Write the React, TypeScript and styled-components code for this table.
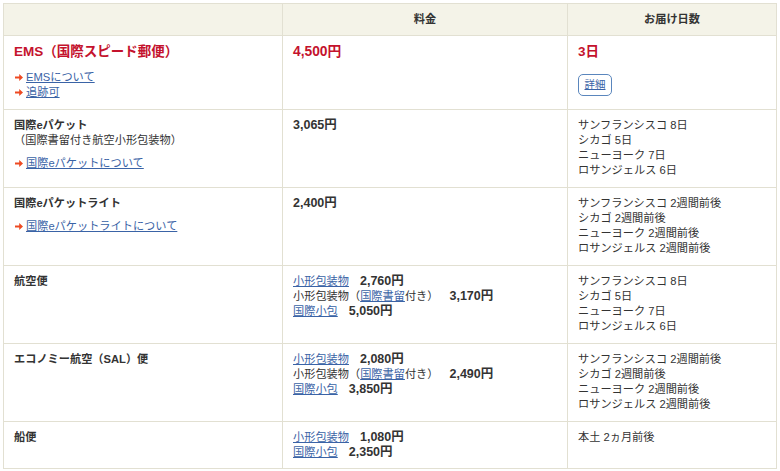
import React from "react";
import styled, { createGlobalStyle } from "styled-components";

const Global = createGlobalStyle`
  html, body { margin: 0; padding: 0; background: #fff; }
  body {
    font-family: "Liberation Sans", "Noto Sans CJK JP", sans-serif;
    color: #333;
  }
`;

const Page = styled.div`
  padding: 3px 0 0 3px;
`;

const Table = styled.table`
  width: 773px;
  border-collapse: collapse;
  table-layout: fixed;
  font-size: 11.2px;
  line-height: 15.25px;
  border: 1px solid #e2e0d2;
`;

const HeadCell = styled.th`
  background: #f4f3e8;
  border: 1px solid #e2e0d2;
  height: 31px;
  padding: 0 10px;
  font-weight: bold;
  text-align: center;
  vertical-align: middle;
  color: #333;
`;

const Cell = styled.td`
  border: 1px solid #e2e0d2;
  padding: 8px 10px 8px 10px;
  vertical-align: top;
  text-align: left;
`;

const EmsTitle = styled.div`
  color: #c4122d;
  font-weight: bold;
  font-size: 13.5px;
  line-height: 16px;
`;

const ServiceTitle = styled.div`
  font-weight: bold;
`;

const Sub = styled.div`
  color: #333;
`;

const LinkList = styled.div<{ $gap: number }>`
  margin-top: ${(p) => p.$gap}px;
  display: flex;
  flex-direction: column;
`;

const ArrowRow = styled.div`
  display: flex;
  align-items: center;
  gap: 3px;
  padding-left: 1px;
`;

const A = styled.a`
  color: #3a63a6;
  text-decoration: underline;
  text-underline-offset: 1px;
`;

const Price = styled.span<{ $red?: boolean }>`
  font-weight: bold;
  color: ${(p) => (p.$red ? "#c4122d" : "#333")};
  font-size: ${(p) => (p.$red ? "13.8px" : "12.5px")};
  line-height: ${(p) => (p.$red ? "16px" : "15.25px")};
`;

const PriceLine = styled.div`
  display: flex;
  align-items: baseline;
  gap: 11px;
  white-space: nowrap;
`;

const DetailButton = styled.a`
  display: inline-flex;
  align-items: center;
  justify-content: center;
  margin-top: 14px;
  width: 34px;
  height: 22px;
  box-sizing: border-box;
  border: 1px solid #5a86bd;
  border-radius: 5px;
  color: #3a63a6;
  font-size: 10.5px;
  text-decoration: underline;
  background: #fff;
`;

const Lines = styled.div`
  display: flex;
  flex-direction: column;
`;

const Arrow = () => (
  <svg width="8" height="7" viewBox="0 0 8 7">
    <path d="M0 2.4h4.2V0L8 3.5 4.2 7V4.6H0z" fill="#ee4a22" />
  </svg>
);

const ArrowLink = ({ children }: { children: React.ReactNode }) => (
  <ArrowRow>
    <Arrow />
    <A href="#">{children}</A>
  </ArrowRow>
);

const days = ["サンフランシスコ 8日", "シカゴ 5日", "ニューヨーク 7日", "ロサンジェルス 6日"];
const weeks = [
  "サンフランシスコ 2週間前後",
  "シカゴ 2週間前後",
  "ニューヨーク 2週間前後",
  "ロサンジェルス 2週間前後",
];

const DayList = ({ items }: { items: string[] }) => (
  <Lines>
    {items.map((t) => (
      <div key={t}>{t}</div>
    ))}
  </Lines>
);

const PriceBlock = ({ small, reg, parcel }: { small: string; reg?: string; parcel: string }) => (
  <Lines>
    <PriceLine>
      <A href="#">小形包装物</A>
      <Price>{small}</Price>
    </PriceLine>
    {reg && (
      <PriceLine>
        <span>
          小形包装物（<A href="#">国際書留</A>付き）
        </span>
        <Price>{reg}</Price>
      </PriceLine>
    )}
    <PriceLine>
      <A href="#">国際小包</A>
      <Price>{parcel}</Price>
    </PriceLine>
  </Lines>
);

export default function App() {
  return (
    <Page>
      <Global />
      <Table>
        <colgroup>
          <col style={{ width: 279 }} />
          <col style={{ width: 285 }} />
          <col style={{ width: 209 }} />
        </colgroup>
        <thead>
          <tr>
            <HeadCell />
            <HeadCell>料金</HeadCell>
            <HeadCell>お届け日数</HeadCell>
          </tr>
        </thead>
        <tbody>
          <tr>
            <Cell>
              <EmsTitle>EMS（国際スピード郵便）</EmsTitle>
              <LinkList $gap={10}>
                <ArrowLink>EMSについて</ArrowLink>
                <ArrowLink>追跡可</ArrowLink>
              </LinkList>
            </Cell>
            <Cell>
              <Price $red>4,500円</Price>
            </Cell>
            <Cell>
              <EmsTitle>3日</EmsTitle>
              <DetailButton href="#">詳細</DetailButton>
            </Cell>
          </tr>
          <tr>
            <Cell>
              <ServiceTitle>国際eパケット</ServiceTitle>
              <Sub>（国際書留付き航空小形包装物）</Sub>
              <LinkList $gap={8}>
                <ArrowLink>国際eパケットについて</ArrowLink>
              </LinkList>
            </Cell>
            <Cell>
              <Price>3,065円</Price>
            </Cell>
            <Cell>
              <DayList items={days} />
            </Cell>
          </tr>
          <tr>
            <Cell>
              <ServiceTitle>国際eパケットライト</ServiceTitle>
              <LinkList $gap={8}>
                <ArrowLink>国際eパケットライトについて</ArrowLink>
              </LinkList>
            </Cell>
            <Cell>
              <Price>2,400円</Price>
            </Cell>
            <Cell>
              <DayList items={weeks} />
            </Cell>
          </tr>
          <tr>
            <Cell>
              <ServiceTitle>航空便</ServiceTitle>
            </Cell>
            <Cell>
              <PriceBlock small="2,760円" reg="3,170円" parcel="5,050円" />
            </Cell>
            <Cell>
              <DayList items={days} />
            </Cell>
          </tr>
          <tr>
            <Cell>
              <ServiceTitle>エコノミー航空（SAL）便</ServiceTitle>
            </Cell>
            <Cell>
              <PriceBlock small="2,080円" reg="2,490円" parcel="3,850円" />
            </Cell>
            <Cell>
              <DayList items={weeks} />
            </Cell>
          </tr>
          <tr>
            <Cell>
              <ServiceTitle>船便</ServiceTitle>
            </Cell>
            <Cell>
              <PriceBlock small="1,080円" parcel="2,350円" />
            </Cell>
            <Cell>
              <DayList items={["本土 2ヵ月前後"]} />
            </Cell>
          </tr>
        </tbody>
      </Table>
    </Page>
  );
}
